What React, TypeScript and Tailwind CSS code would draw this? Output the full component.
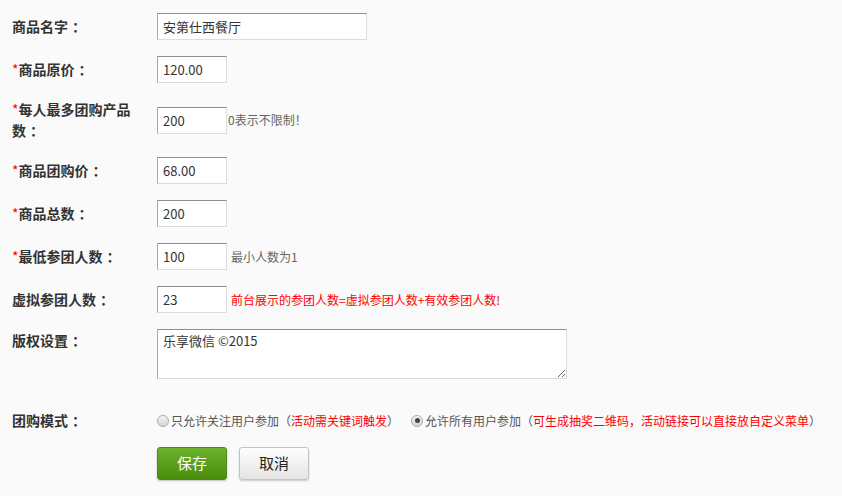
import type { ReactNode } from 'react'

const font = { fontFamily: '"Noto Sans CJK SC", "Liberation Sans", sans-serif' }

const inputCls =
  'h-[27px] bg-white border border-t-[#8e8e8e] border-l-[#a9a9a9] border-r-[#dcdcdc] border-b-[#dcdcdc] px-[5px] text-[13px] leading-[25px] text-[#333] outline-none'

function Row({ label, required, children, top }: { label: string; required?: boolean; children: ReactNode; top?: boolean }) {
  return (
    <div className={`flex py-2 ${top ? 'items-start' : 'items-center'}`}>
      <div className={`w-[157px] shrink-0 pl-3 pr-[22px] text-[14px] font-bold leading-[21px] text-[#333] ${top ? 'pt-px' : ''}`}>
        {required && <span className="font-normal text-[#f00]">*</span>}
        {label}
        <span className="ml-[4px]">：</span>
      </div>
      <div className="flex items-center">{children}</div>
    </div>
  )
}

function Radio({ checked }: { checked?: boolean }) {
  return (
    <span className="inline-flex h-[12px] w-[12px] shrink-0 items-center justify-center rounded-full border border-[#aaa] bg-gradient-to-b from-[#f4f4f4] to-[#d6d6d6]">
      {checked && <span className="h-[5px] w-[5px] rounded-full bg-[#444]" />}
    </span>
  )
}

export default function App() {
  return (
    <div className="min-h-screen bg-[#fafafa] pt-[5px]" style={font}>
      <Row label="商品名字">
        <input className={`${inputCls} w-[210px]`} defaultValue="安第仕西餐厅" />
      </Row>
      <Row label="商品原价" required>
        <input className={`${inputCls} w-[70px]`} defaultValue="120.00" />
      </Row>
      <Row label="每人最多团购产品数" required>
        <input className={`${inputCls} w-[70px]`} defaultValue="200" />
        <span className="ml-px text-[12px] text-[#666]">0表示不限制！</span>
      </Row>
      <Row label="商品团购价" required>
        <input className={`${inputCls} w-[70px]`} defaultValue="68.00" />
      </Row>
      <Row label="商品总数" required>
        <input className={`${inputCls} w-[70px]`} defaultValue="200" />
      </Row>
      <Row label="最低参团人数" required>
        <input className={`${inputCls} w-[70px]`} defaultValue="100" />
        <span className="ml-[4px] text-[12px] text-[#666]">最小人数为1</span>
      </Row>
      <Row label="虚拟参团人数">
        <input className={`${inputCls} w-[70px]`} defaultValue="23" />
        <span className="ml-[4px] text-[12px] text-[#f00]">前台展示的参团人数=虚拟参团人数+有效参团人数!</span>
      </Row>
      <Row label="版权设置" top>
        <textarea
          className="h-[50px] w-[410px] border border-t-[#8e8e8e] border-l-[#a9a9a9] border-r-[#dcdcdc] border-b-[#dcdcdc] bg-white px-[5px] py-[2px] text-[13px] leading-[18px] text-[#333] outline-none"
          defaultValue="乐享微信 ©2015"
        />
      </Row>
      <div className="mt-[15px]">
        <Row label="团购模式">
          <div className="flex items-center text-[12px] text-[#555]">
            <Radio />
            <span className="ml-[2px]">
              只允许关注用户参加（<span className="text-[#f00]">活动需关键词触发</span>）
            </span>
            <span className="ml-[12px] flex items-center">
              <Radio checked />
              <span className="ml-[2px]">
                允许所有用户参加（<span className="text-[#f00]">可生成抽奖二维码，活动链接可以直接放自定义菜单</span>）
              </span>
            </span>
          </div>
        </Row>
      </div>
      <div className="flex gap-3 pl-[157px] pt-2">
        <button className="h-[33px] w-[70px] rounded-[3px] border border-[#4b8a12] bg-gradient-to-b from-[#6db32c] to-[#4a8c0c] text-[15px] text-white shadow-[0_1px_2px_rgba(0,0,0,0.25)]">
          保存
        </button>
        <button className="h-[33px] w-[70px] rounded-[3px] border border-[#c4c4c4] bg-gradient-to-b from-[#fefefe] to-[#e4e4e4] text-[15px] text-[#222] shadow-[0_1px_2px_rgba(0,0,0,0.2)]">
          取消
        </button>
      </div>
    </div>
  )
}
